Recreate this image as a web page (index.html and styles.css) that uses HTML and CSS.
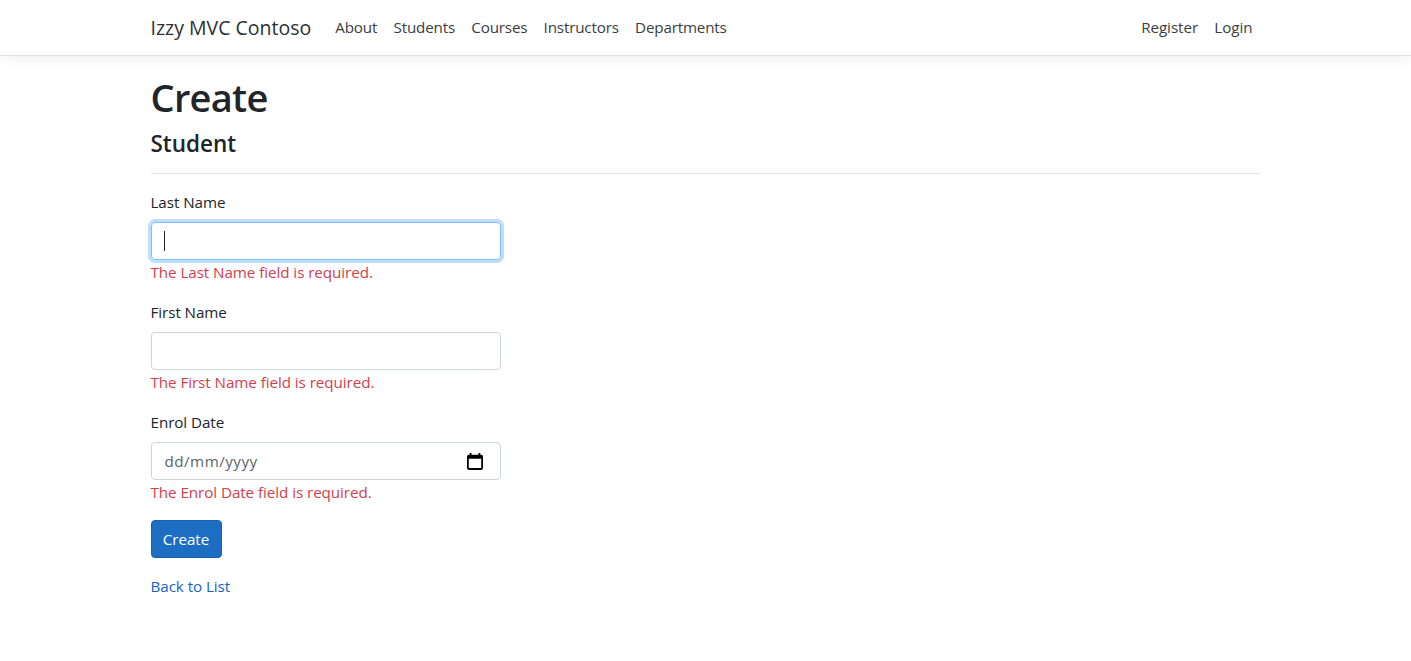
FILE: index.html
```html
<!DOCTYPE html>
<html lang="en">
<head>
<meta charset="utf-8">
<title>Create - Izzy MVC Contoso</title>
<link rel="stylesheet" href="styles.css">
</head>
<body>
<header class="navbar">
  <div class="container nav-inner">
    <a class="brand">Izzy MVC Contoso</a>
    <nav class="nav-links">
      <a>About</a>
      <a>Students</a>
      <a>Courses</a>
      <a>Instructors</a>
      <a>Departments</a>
    </nav>
    <nav class="nav-links account">
      <a>Register</a>
      <a>Login</a>
    </nav>
  </div>
</header>
<main class="container">
  <h1>Create</h1>
  <h4>Student</h4>
  <hr>
  <form class="form">
    <div class="group">
      <label>Last Name</label>
      <div class="control focused"><span class="caret"></span></div>
      <span class="error">The Last Name field is required.</span>
    </div>
    <div class="group">
      <label>First Name</label>
      <div class="control"></div>
      <span class="error">The First Name field is required.</span>
    </div>
    <div class="group">
      <label>Enrol Date</label>
      <div class="control"><span class="date">dd/mm/yyyy</span>
        <svg class="calendar" viewBox="0 0 18 20" width="16" height="18"><path d="M3 1h2v2h8V1h2v2h1a2 2 0 0 1 2 2v13a2 2 0 0 1-2 2H2a2 2 0 0 1-2-2V5a2 2 0 0 1 2-2h1zM2 7.500V18h14V7.500z" fill-rule="evenodd"/></svg>
      </div>
      <span class="error">The Enrol Date field is required.</span>
    </div>
    <button type="button" class="button">Create</button>
  </form>
  <a class="back">Back to List</a>
</main>
</body>
</html>
```
FILE: styles.css
```css
* { box-sizing: border-box; }
body { margin: 0; background: #fff; color: #212529; font: 400 15.200px/24px "Open Sans", "Noto Sans", sans-serif; letter-spacing: -0.06px; }
.container { width: 1110px; margin: 0 auto; }
.navbar { height: 56px; border-bottom: 1px solid #dee2e6; box-shadow: 0 4px 12px rgba(0,0,0,.05); margin-bottom: 16px; }
.nav-inner { display: flex; height: 55px; align-items: center; }
.brand { font-size: 19.500px; letter-spacing: 0; margin-right: 24px; color: #2c3034; }
.nav-links { display: flex; gap: 16.300px; padding-bottom: 2px; color: #3a3e42; letter-spacing: -0.170px; }
.account { margin-left: auto; padding-right: 8px; letter-spacing: -0.060px; }
h1 { margin: 0 0 8px; padding-top: 1px; font-size: 38px; line-height: 48px; font-weight: 600; letter-spacing: -0.700px; height: 48px; }
h4 { margin: 0; padding-top: 1px; height: 29px; font-size: 22.500px; line-height: 29px; font-weight: 600; letter-spacing: 0; }
hr { margin: 16px 0; border: 0; border-top: 1px solid #e3e3e3; }
.form { width: 350px; }
.group { margin-bottom: 16px; }
label { display: block; margin-bottom: 8px; }
.control { display: flex; align-items: center; height: 38px; padding: 0 12px; border: 1px solid #ced4da; border-radius: 4px; }
.focused { border-color: #80bdff; box-shadow: 0 0 0 3px #bfdeff; }
.caret { width: 1px; height: 20px; background: #222; }
.date { color: #5c646b; padding-left: 1px; letter-spacing: .480px; }
.calendar { margin-left: auto; margin-right: 5px; }
.error { display: block; color: #d23e4c; }
.button { display: block; height: 38px; width: 71px; padding: 0; text-align: center; border: 1px solid #1861ac; border-radius: 4px; background: #1b6ec2; color: #fff; font: inherit; letter-spacing: inherit; }
.back { display: block; margin-top: 16px; color: #1663c4; }
```
